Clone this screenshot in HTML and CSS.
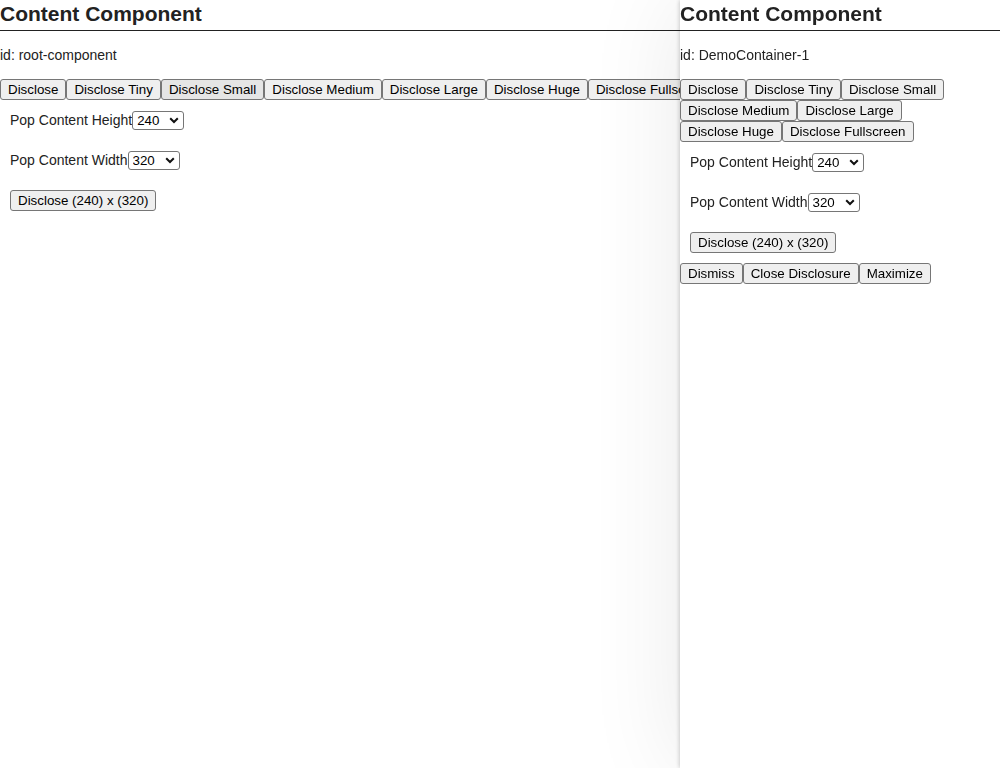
FILE: index.html
```html
<!DOCTYPE html>
<html lang="en">
<head>
<meta charset="utf-8">
<title>Content Component</title>
<link rel="stylesheet" href="styles.css">
</head>
<body>
<div class="component main">
  <h2 class="title">Content Component</h2>
  <p class="ident">id: root-component</p>
  <div class="btns nowrap">
    <button class="btn">Disclose</button><button class="btn">Disclose Tiny</button><button class="btn hover">Disclose Small</button><button class="btn">Disclose Medium</button><button class="btn">Disclose Large</button><button class="btn">Disclose Huge</button><button class="btn">Disclose Fullscreen</button>
  </div>
  <div class="form">
    <div class="row"><label class="lbl">Pop Content Height</label><span class="selwrap"><select class="sel"><option>240</option></select><svg class="chev" width="10" height="7" viewBox="0 0 10 7"><polyline points="1.2,1.2 5,5 8.8,1.2" fill="none" stroke="#111" stroke-width="2"/></svg></span></div>
    <div class="row"><label class="lbl">Pop Content Width</label><span class="selwrap"><select class="sel"><option>320</option></select><svg class="chev" width="10" height="7" viewBox="0 0 10 7"><polyline points="1.2,1.2 5,5 8.8,1.2" fill="none" stroke="#111" stroke-width="2"/></svg></span></div>
    <div class="row"><button class="btn">Disclose (240) x (320)</button></div>
  </div>
</div>
<div class="component panel">
  <h2 class="title">Content Component</h2>
  <p class="ident">id: DemoContainer-1</p>
  <div class="btns">
    <button class="btn">Disclose</button><button class="btn">Disclose Tiny</button><button class="btn">Disclose Small</button><button class="btn">Disclose Medium</button><button class="btn">Disclose Large</button><button class="btn">Disclose Huge</button><button class="btn">Disclose Fullscreen</button>
  </div>
  <div class="form">
    <div class="row"><label class="lbl">Pop Content Height</label><span class="selwrap"><select class="sel"><option>240</option></select><svg class="chev" width="10" height="7" viewBox="0 0 10 7"><polyline points="1.2,1.2 5,5 8.8,1.2" fill="none" stroke="#111" stroke-width="2"/></svg></span></div>
    <div class="row"><label class="lbl">Pop Content Width</label><span class="selwrap"><select class="sel"><option>320</option></select><svg class="chev" width="10" height="7" viewBox="0 0 10 7"><polyline points="1.2,1.2 5,5 8.8,1.2" fill="none" stroke="#111" stroke-width="2"/></svg></span></div>
    <div class="row"><button class="btn">Disclose (240) x (320)</button></div>
  </div>
  <div class="btns">
    <button class="btn">Dismiss</button><button class="btn">Close Disclosure</button><button class="btn">Maximize</button>
  </div>
</div>
</body>
</html>
```
FILE: styles.css
```css
html, body {
  margin: 0;
  padding: 0;
  background: #fff;
}
body {
  font-family: "Liberation Sans", Arial, sans-serif;
  color: #222;
  overflow: hidden;
  height: 768px;
}
.component {
  background: #fff;
}
.main {
  width: 1000px;
}
.panel {
  position: fixed;
  top: 0;
  right: 0;
  bottom: 0;
  width: 320px;
  box-shadow: -1px 0 4px rgba(0,0,0,0.18), 0 0 90px rgba(0,0,0,0.09);
}
.title {
  margin: 0;
  padding: 2px 0 4px;
  font-size: 21px;
  font-weight: bold;
  line-height: 24px;
  border-bottom: 1px solid #222;
  white-space: nowrap;
}
.ident {
  margin: 16px 0;
  font-size: 14px;
  line-height: 16px;
}
.btns {
  display: flex;
  flex-wrap: wrap;
}
.btns.nowrap {
  flex-wrap: nowrap;
}
.btn {
  font-family: "Liberation Sans", Arial, sans-serif;
  font-size: 13.333px;
  line-height: 15px;
  color: #000;
  margin: 0;
  padding: 2px 7px;
  height: 21px;
  border: 1px solid #767676;
  border-radius: 3px;
  background: #efefef;
  white-space: nowrap;
  flex: none;
}
.btn.hover {
  background: #e5e5e5;
}
.form {
  padding: 10px 10px 11px;
  display: flex;
  flex-direction: column;
  align-items: flex-start;
  gap: 20px;
}
.row {
  display: flex;
  align-items: center;
  height: 20px;
}
.lbl {
  font-size: 14px;
  line-height: 16px;
}
.selwrap {
  position: relative;
  display: inline-flex;
}
.sel {
  -webkit-appearance: none;
  appearance: none;
  font-family: "Liberation Sans", Arial, sans-serif;
  font-size: 13.333px;
  color: #000;
  margin: 0;
  width: 52px;
  height: 19px;
  padding: 0 0 0 4px;
  border: 1px solid #767676;
  border-radius: 3px;
  background: #fff;
}
.chev {
  position: absolute;
  right: 5px;
  top: 6px;
  pointer-events: none;
}
```
